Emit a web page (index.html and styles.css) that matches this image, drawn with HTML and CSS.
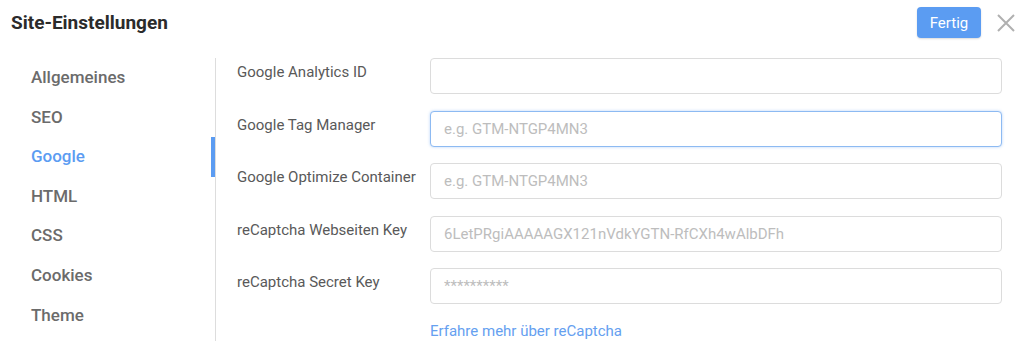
FILE: index.html
```html
<!DOCTYPE html>
<html lang="de">
<head>
    <meta charset="UTF-8">
    <meta name="viewport" content="width=device-width, initial-scale=1.0">
    <title>Site-Einstellungen</title>
    <link rel="stylesheet" href="styles.css">
</head>
<body>
    <div class="dialog">
        <div class="header">
            <h1>Site-Einstellungen</h1>
            <button class="button">Fertig</button>
            <button class="close" aria-label="Schließen">
                <svg width="18" height="18" viewBox="0 0 18 18">
                    <path d="M1 1 L17 17 M17 1 L1 17" stroke="#b0b0b0" stroke-width="2" fill="none"/>
                </svg>
            </button>
        </div>

        <div class="main">
            <ul class="menu">
                <li>Allgemeines</li>
                <li>SEO</li>
                <li class="active">Google</li>
                <li>HTML</li>
                <li>CSS</li>
                <li>Cookies</li>
                <li>Theme</li>
            </ul>

            <form class="settings">
                <div class="row">
                    <label>Google Analytics ID</label>
                    <input type="text">
                </div>
                <div class="row">
                    <label>Google Tag Manager</label>
                    <input type="text" class="focus" placeholder="e.g. GTM-NTGP4MN3">
                </div>
                <div class="row">
                    <label>Google Optimize Container</label>
                    <input type="text" placeholder="e.g. GTM-NTGP4MN3">
                </div>
                <div class="row">
                    <label>reCaptcha Webseiten Key</label>
                    <input type="text" placeholder="6LetPRgiAAAAAGX121nVdkYGTN-RfCXh4wAlbDFh">
                </div>
                <div class="row">
                    <label>reCaptcha Secret Key</label>
                    <input type="text" placeholder="**********">
                </div>
                <div class="row">
                    <span class="spacer"></span>
                    <a href="#" class="more">Erfahre mehr über reCaptcha</a>
                </div>
            </form>
        </div>
    </div>
</body>
</html>
```

FILE: styles.css
```css
body {
    margin: 0;
    padding: 0;
    font-family: Roboto, "Liberation Sans", Arial, sans-serif;
    background-color: #fff;
    color: #555;
}
.dialog {
    width: 1024px;
    height: 341px;
    overflow: hidden;
}
.header {
    display: flex;
    align-items: center;
    height: 31px;
    padding: 7px 9px 0 11px;
}
.header h1 {
    flex: 1;
    margin: 0;
    font-size: 19px;
    font-weight: 700;
    color: #2b2b2b;
}
.button {
    width: 64px;
    height: 31px;
    background-color: #5b9cf2;
    color: #fff;
    border: none;
    border-radius: 4px;
    font-family: inherit;
    font-size: 15px;
    padding: 0;
    cursor: pointer;
    box-shadow: 0 1px 2px rgba(0, 0, 0, 0.15);
}
.close {
    background: none;
    border: none;
    padding: 0;
    margin-left: 16px;
    width: 18px;
    height: 18px;
    display: flex;
    cursor: pointer;
}
.main {
    display: flex;
    margin-top: 20px;
}
.menu {
    list-style: none;
    margin: 0;
    padding: 0;
    width: 215px;
    border-right: 1px solid #ddd;
    height: 290px;
}
.menu li {
    position: relative;
    height: 39.6px;
    line-height: 39.6px;
    padding-left: 31px;
    font-size: 17px;
    font-weight: 500;
    color: #6b6b6b;
}
.menu li.active {
    color: #5b9cf2;
}
.menu li.active::after {
    content: "";
    position: absolute;
    right: 0;
    top: 0;
    width: 4px;
    height: 100%;
    background-color: #5b9cf2;
}
.settings {
    flex: 1;
    padding-left: 21px;
    padding-right: 22px;
    display: flex;
    flex-direction: column;
    gap: 16.5px;
}
.row {
    display: flex;
    align-items: flex-start;
}
.row label,
.spacer {
    width: 193px;
    flex: none;
}
.row label {
    font-size: 15px;
    line-height: 20px;
    padding-top: 4px;
    color: #595959;
}
input[type="text"] {
    flex: 1;
    height: 36px;
    box-sizing: border-box;
    border: 1px solid #dcdcdc;
    border-radius: 4px;
    padding: 0 13px;
    font-family: inherit;
    font-size: 15px;
    color: #444;
    outline: none;
}
input::placeholder {
    color: #bdbdbd;
}
input.focus {
    border-color: #8dbaf2;
    box-shadow: 0 0 3px rgba(91, 156, 242, 0.45);
}
.more {
    font-size: 15px;
    line-height: 20px;
    color: #65a0f0;
    text-decoration: none;
}
```
